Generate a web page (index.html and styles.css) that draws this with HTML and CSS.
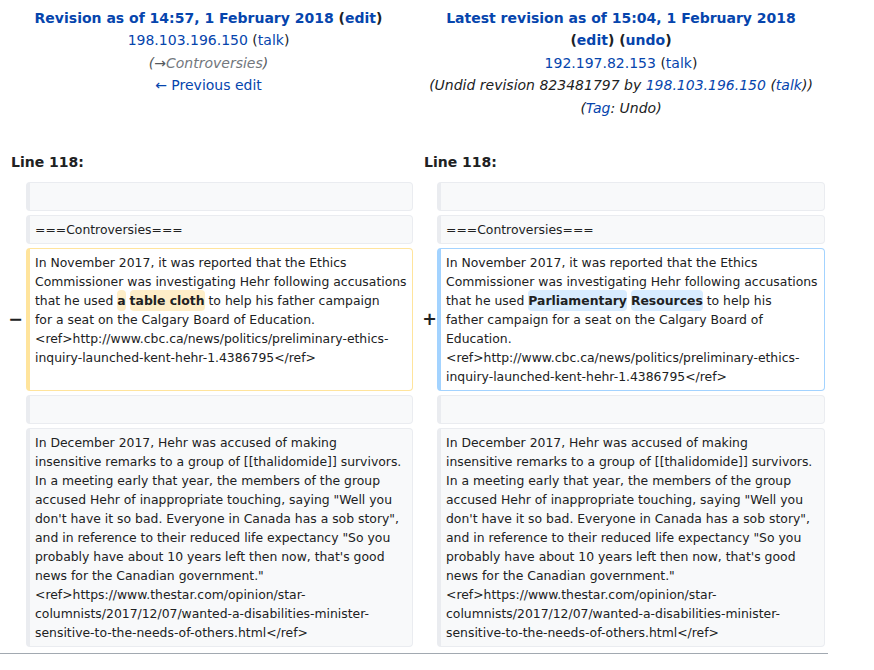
FILE: index.html
```html
<!DOCTYPE html>
<html>
<head>
<meta charset="utf-8">
<link rel="stylesheet" href="styles.css">
</head>
<body>
<div class="diff">
  <div class="title title-left">
    <div class="t-strong"><a href="#">Revision as of 14:57, 1 February 2018</a> (<a href="#">edit</a>)</div>
    <div><a href="#">198.103.196.150</a> (<a href="#">talk</a>)</div>
    <div class="comment">(→<span class="autocomment">Controversies</span>)</div>
    <div><a href="#">← Previous edit</a></div>
  </div>
  <div class="title title-right">
    <div class="t-strong"><a href="#">Latest revision as of 15:04, 1 February 2018</a><br>(<a href="#">edit</a>) (<a href="#">undo</a>)</div>
    <div><a href="#">192.197.82.153</a> (<a href="#">talk</a>)</div>
    <div class="comment">(Undid revision 823481797 by <a href="#">198.103.196.150</a> (<a href="#">talk</a>))</div>
    <div class="comment">(<a href="#">Tag</a>: Undo)</div>
  </div>

  <div class="lineno lineno-left">Line 118:</div>
  <div class="lineno lineno-right">Line 118:</div>

  <div class="marker marker-left"></div>
  <div class="cell ctx"></div>
  <div class="marker marker-right"></div>
  <div class="cell ctx"></div>

  <div class="marker marker-left"></div>
  <div class="cell ctx">===Controversies===</div>
  <div class="marker marker-right"></div>
  <div class="cell ctx">===Controversies===</div>

  <div class="marker marker-left">−</div>
  <div class="cell del">In November 2017, it was reported that the Ethics<br>Commissioner was investigating Hehr following accusations<br>that he used <span class="x">a</span> <span class="x">table cloth</span> to help his father campaign<br>for a seat on the Calgary Board of Education.<br>&lt;ref&gt;http://www.cbc.ca/news/politics/preliminary-ethics-<br>inquiry-launched-kent-hehr-1.4386795&lt;/ref&gt;</div>
  <div class="marker marker-right">+</div>
  <div class="cell add">In November 2017, it was reported that the Ethics<br>Commissioner was investigating Hehr following accusations<br>that he used <span class="x">Parliamentary</span> <span class="x">Resources</span> to help his<br>father campaign for a seat on the Calgary Board of<br>Education.<br>&lt;ref&gt;http://www.cbc.ca/news/politics/preliminary-ethics-<br>inquiry-launched-kent-hehr-1.4386795&lt;/ref&gt;</div>

  <div class="marker marker-left"></div>
  <div class="cell ctx"></div>
  <div class="marker marker-right"></div>
  <div class="cell ctx"></div>

  <div class="marker marker-left"></div>
  <div class="cell ctx">In December 2017, Hehr was accused of making<br>insensitive remarks to a group of [[thalidomide]] survivors.<br>In a meeting early that year, the members of the group<br>accused Hehr of inappropriate touching, saying "Well you<br>don't have it so bad. Everyone in Canada has a sob story",<br>and in reference to their reduced life expectancy "So you<br>probably have about 10 years left then now, that's good<br>news for the Canadian government."<br>&lt;ref&gt;https://www.thestar.com/opinion/star-<br>columnists/2017/12/07/wanted-a-disabilities-minister-<br>sensitive-to-the-needs-of-others.html&lt;/ref&gt;</div>
  <div class="marker marker-right"></div>
  <div class="cell ctx">In December 2017, Hehr was accused of making<br>insensitive remarks to a group of [[thalidomide]] survivors.<br>In a meeting early that year, the members of the group<br>accused Hehr of inappropriate touching, saying "Well you<br>don't have it so bad. Everyone in Canada has a sob story",<br>and in reference to their reduced life expectancy "So you<br>probably have about 10 years left then now, that's good<br>news for the Canadian government."<br>&lt;ref&gt;https://www.thestar.com/opinion/star-<br>columnists/2017/12/07/wanted-a-disabilities-minister-<br>sensitive-to-the-needs-of-others.html&lt;/ref&gt;</div>
</div>
<div class="rule"></div>
</body>
</html>
```
FILE: styles.css
```css
html, body {
  margin: 0;
  padding: 0;
  background: #ffffff;
}
body {
  font-family: "DejaVu Sans", sans-serif;
  color: #202122;
  font-size: 14px;
  padding-top: 7px;
}
a {
  color: #0645ad;
  text-decoration: none;
}
.diff {
  width: 825px;
  display: grid;
  grid-template-columns: 26px 387px 24px 388px;
  row-gap: 4px;
}
.title {
  text-align: center;
  line-height: 22.4px;
  padding-left: 4px;
}
.title-left {
  grid-column: 1 / 3;
}
.title-right {
  grid-column: 3 / 5;
}
.t-strong {
  font-weight: bold;
}
.comment {
  font-style: italic;
  color: #202122;
}
.title-left .comment {
  color: #54595d;
}
.autocomment {
  color: #72777d;
}
.lineno {
  font-weight: bold;
  line-height: 22px;
  padding-left: 11px;
  margin-top: 28px;
  margin-bottom: 5px;
}
.lineno-left {
  grid-column: 1 / 3;
}
.lineno-right {
  grid-column: 3 / 5;
}
.marker {
  display: flex;
  align-items: center;
  justify-content: flex-end;
  font-weight: bold;
  font-size: 17.5px;
  line-height: 1.2;
}
.marker-left {
  padding-right: 3px;
}
.marker-right {
  padding-right: 0;
}
.cell {
  font-size: 12.4px;
  line-height: 19px;
  padding: 4px 6px 4px 5px;
  min-height: 19px;
  border: 1px solid #eaecf0;
  border-left-width: 4px;
  border-radius: 4px;
  background: #f8f9fa;
  white-space: nowrap;
}
.del {
  background: #ffffff;
  border-color: #ffe49c;
}
.add {
  background: #ffffff;
  border-color: #a3d3ff;
}
.x {
  font-weight: bold;
  border-radius: 4px;
  padding: 3px 0;
}
.del .x {
  background: #feeec8;
}
.add .x {
  background: #d8ecff;
}
.rule {
  width: 828px;
  margin-top: 6px;
  border-top: 1px solid #a2a9b1;
}
```
